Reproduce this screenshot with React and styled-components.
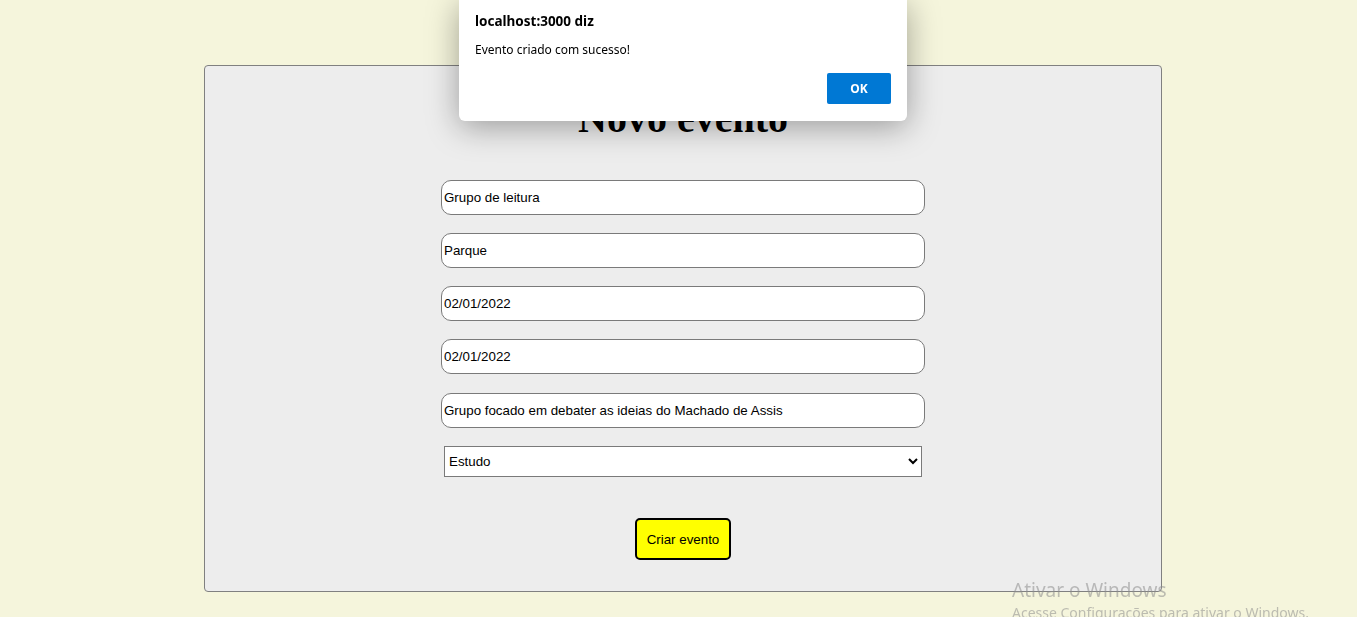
import React from "react";
import styled, { createGlobalStyle } from "styled-components";

const GlobalStyle = createGlobalStyle`
  html, body {
    margin: 0;
    padding: 0;
    background-color: #f5f5dc;
    font-family: "Liberation Serif", "Times New Roman", serif;
  }
  * {
    box-sizing: border-box;
  }
`;

function App() {
  return (
    <>
      <GlobalStyle />
      <Page>
        <Card>
          <Title>Novo evento</Title>
          <Form onSubmit={(e) => e.preventDefault()}>
            <Field type="text" defaultValue="Grupo de leitura" />
            <Field type="text" defaultValue="Parque" />
            <Field type="text" defaultValue="02/01/2022" />
            <Field type="text" defaultValue="02/01/2022" />
            <Field
              type="text"
              defaultValue="Grupo focado em debater as ideias do Machado de Assis"
            />
            <Select defaultValue="Estudo">
              <option>Estudo</option>
              <option>Lazer</option>
              <option>Trabalho</option>
            </Select>
            <SubmitButton type="submit">Criar evento</SubmitButton>
          </Form>
        </Card>
      </Page>

      <Alert>
        <AlertTitle>localhost:3000 diz</AlertTitle>
        <AlertMessage>Evento criado com sucesso!</AlertMessage>
        <AlertFooter>
          <OkButton>OK</OkButton>
        </AlertFooter>
      </Alert>

      <Watermark>
        <WatermarkTitle>Ativar o Windows</WatermarkTitle>
        <WatermarkText>Acesse Configurações para ativar o Windows.</WatermarkText>
      </Watermark>
    </>
  );
}

const Page = styled.div`
  min-height: 617px;
  padding: 65px 0 0 204px;
`;

const Card = styled.div`
  width: 958px;
  height: 527px;
  background-color: #ededed;
  border: 1px solid #808080;
  border-radius: 4px;
  display: flex;
  flex-direction: column;
  align-items: center;
`;

const Title = styled.h1`
  font-family: "Liberation Serif", "Times New Roman", serif;
  font-size: 40px;
  font-weight: bold;
  margin: 30px 0 0;
  line-height: 46px;
  color: #000;
`;

const Form = styled.form`
  display: flex;
  flex-direction: column;
  align-items: center;
  margin-top: 38px;
`;

const Field = styled.input`
  width: 484px;
  height: 35px;
  margin-bottom: 18px;
  padding: 0 2px;
  border: 1px solid #7a7a7a;
  border-radius: 10px;
  background: #fff;
  font-family: "Liberation Sans", Arial, sans-serif;
  font-size: 13.333px;
  color: #000;
  outline: none;

  &:nth-of-type(5) {
    margin-top: 1px;
  }
`;

const Select = styled.select`
  width: 478px;
  height: 31px;
  padding: 0;
  border: 1px solid #7a7a7a;
  border-radius: 0;
  background: #fff;
  font-family: "Liberation Sans", Arial, sans-serif;
  font-size: 13.333px;
  color: #000;
`;

const SubmitButton = styled.button`
  margin-top: 41px;
  width: 96px;
  height: 42px;
  padding: 0;
  background-color: #ffff00;
  border: 2px solid #000;
  border-radius: 5px;
  font-family: "Liberation Sans", Arial, sans-serif;
  font-size: 13.333px;
  color: #000;
  cursor: pointer;
`;

const Alert = styled.div`
  position: fixed;
  top: 0;
  left: 459px;
  width: 448px;
  height: 121px;
  background: #fff;
  border-radius: 0 0 6px 6px;
  box-shadow: 0 6px 32px rgba(0, 0, 0, 0.35);
  padding: 12px 16px 0;
  font-family: "Noto Sans", "Open Sans", sans-serif;
  color: #000;
  display: flex;
  flex-direction: column;
`;

const AlertTitle = styled.div`
  font-size: 13.5px;
  font-weight: bold;
  line-height: 18px;
`;

const AlertMessage = styled.div`
  font-size: 12px;
  line-height: 17px;
  margin-top: 11px;
`;

const AlertFooter = styled.div`
  display: flex;
  justify-content: flex-end;
  margin-top: 15px;
`;

const OkButton = styled.button`
  width: 64px;
  height: 31px;
  background: #0078d4;
  border: none;
  border-radius: 2px;
  color: #fff;
  font-family: "Noto Sans", "Open Sans", sans-serif;
  font-size: 12px;
  font-weight: bold;
`;

const Watermark = styled.div`
  position: fixed;
  left: 1012px;
  top: 578px;
  font-family: "Noto Sans", "Open Sans", sans-serif;
  color: rgba(140, 140, 140, 0.55);
  white-space: nowrap;
  pointer-events: none;
`;

const WatermarkTitle = styled.div`
  font-size: 19px;
  line-height: 24px;
`;

const WatermarkText = styled.div`
  font-size: 14px;
  line-height: 22px;
`;

export default App;
